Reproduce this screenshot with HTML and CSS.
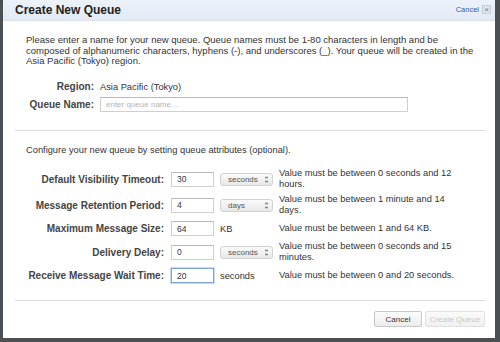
FILE: index.html
```html
<!DOCTYPE html>
<html>
    <head>
        <meta charset="utf-8">
        <title>Create New Queue</title>
        <link rel="stylesheet" href="styles.css">
    </head>
    <body>
        <div class="dialog">
            <div class="dialog-head">
                <h1>Create New Queue</h1>
                <a class="close" href="#">Cancel <span class="close-x">&#215;</span></a>
            </div>
            <div class="dialog-body">
                <p class="intro">Please enter a name for your new queue. Queue names must be 1-80 characters in length and be<br>composed of alphanumeric characters, hyphens (-), and underscores (_). Your queue will be created in the<br>Asia Pacific (Tokyo) region.</p>
                <div class="basic">
                    <span class="label">Region:</span>
                    <span class="value">Asia Pacific (Tokyo)</span>
                    <span class="label">Queue Name:</span>
                    <input class="name-input" placeholder="enter queue name...">
                </div>
                <div class="rule"></div>
                <p class="note">Configure your new queue by setting queue attributes (optional).</p>
                <div class="attrs">
                    <span class="label">Default Visibility Timeout:</span>
                    <input class="num" value="30">
                    <span class="sel">seconds<i class="arrows"></i></span>
                    <span class="hint">Value must be between 0 seconds and 12<br>hours.</span>

                    <span class="label">Message Retention Period:</span>
                    <input class="num" value="4">
                    <span class="sel">days<i class="arrows"></i></span>
                    <span class="hint">Value must be between 1 minute and 14<br>days.</span>

                    <span class="label">Maximum Message Size:</span>
                    <input class="num" value="64">
                    <span class="unit">KB</span>
                    <span class="hint">Value must be between 1 and 64 KB.</span>

                    <span class="label">Delivery Delay:</span>
                    <input class="num" value="0">
                    <span class="sel">seconds<i class="arrows"></i></span>
                    <span class="hint">Value must be between 0 seconds and 15<br>minutes.</span>

                    <span class="label">Receive Message Wait Time:</span>
                    <input class="num focus" value="20">
                    <span class="unit">seconds</span>
                    <span class="hint">Value must be between 0 and 20 seconds.</span>
                </div>
                <div class="rule rule-bottom"></div>
                <div class="actions">
                    <button class="btn">Cancel</button>
                    <button class="btn" disabled>Create Queue</button>
                </div>
            </div>
        </div>
    </body>
</html>
```

FILE: styles.css
```css
*{
    margin: 0;
    padding: 0;
    box-sizing: border-box;
}
body{
    background: #4b5055;
    font-family: "Liberation Sans", Arial, sans-serif;
    font-size: 9.3px;
    color: #333;
}
.dialog{
    width: 492px;
    height: 338px;
    margin-left: 3px;
    background: #fff;
    display: flex;
    flex-direction: column;
}
.dialog-head{
    height: 24px;
    display: flex;
    align-items: center;
    justify-content: space-between;
    padding: 0 4px 0 12px;
    background: linear-gradient(#edf2f9, #e3eaf4);
    border-bottom: 1px solid #dae2ec;
}
.dialog-head h1{
    font-size: 12px;
    font-weight: bold;
    color: #222;
}
.close{
    display: flex;
    align-items: center;
    gap: 3px;
    font-size: 7.5px;
    color: #3d5c94;
    text-decoration: none;
}
.close-x{
    width: 9px;
    height: 9px;
    display: flex;
    align-items: center;
    justify-content: center;
    background: #dfe3e8;
    border: 1px solid #c9ced6;
    color: #777;
    font-size: 8px;
    line-height: 1;
}
.dialog-body{
    flex: 1;
    display: flex;
    flex-direction: column;
    padding: 14px 10px 11px 12px;
}
.intro{
    font-size: 9.5px;
    line-height: 10.7px;
    padding-left: 11px;
}
.label{
    font-weight: bold;
    font-size: 10px;
    color: #444;
    text-align: right;
}
.basic{
    display: grid;
    grid-template-columns: 68px 308px;
    column-gap: 6px;
    row-gap: 5px;
    align-items: center;
    margin: 14px 0 0 11px;
}
.name-input{
    height: 15px;
    border: 1px solid #cfcfcf;
    border-top-color: #b9b9b9;
    font: 8px "Liberation Sans", Arial, sans-serif;
    padding-left: 5px;
    color: #333;
}
.name-input::placeholder{
    color: #b4b4b4;
}
.rule{
    border-top: 1px solid #dadada;
    margin-top: 18px;
}
.note{
    margin: 14px 0 0 11px;
    line-height: 11px;
}
.attrs{
    display: grid;
    grid-template-columns: 139px 43px 54px 180px;
    grid-auto-rows: minmax(17px, auto);
    column-gap: 6px;
    row-gap: 4px;
    align-items: center;
    margin: 12px 0 0 11px;
}
.attrs .label{
    margin-right: 1px;
}
.num{
    width: 43px;
    height: 15px;
    border: 1px solid #cfcfcf;
    border-top-color: #b9b9b9;
    font: 8.5px "Liberation Sans", Arial, sans-serif;
    color: #333;
    padding-left: 5px;
}
.num.focus{
    border-color: #7ea4d8;
    box-shadow: 0 0 0 1px #c8daf2;
}
.sel{
    width: 53px;
    height: 13px;
    display: flex;
    align-items: center;
    justify-content: space-between;
    padding: 0 4px 0 7px;
    font-size: 8px;
    color: #555;
    background: linear-gradient(#fafafa, #e8e8e8);
    border: 1px solid #d2d2d2;
    border-radius: 3px;
}
.arrows{
    width: 3px;
    height: 7px;
    border-top: 2px solid #888;
    border-bottom: 2px solid #888;
    transform: scaleY(0.8);
}
.unit{
    font-size: 9.3px;
    color: #333;
}
.hint{
    line-height: 11px;
    margin-left: -1px;
}
.rule-bottom{
    margin-top: 16px;
}
.actions{
    display: flex;
    justify-content: flex-end;
    gap: 3px;
    margin-top: 10px;
}
.btn{
    height: 16px;
    font: 8px "Liberation Sans", Arial, sans-serif;
    color: #333;
    background: linear-gradient(#fdfdfd, #ececec);
    border: 1px solid #c8c8c8;
    border-radius: 2px;
}
.btn:first-child{
    width: 48px;
}
.btn:disabled{
    width: 60px;
    color: #c9c9c9;
    border-color: #e0e0e0;
    background: linear-gradient(#fafafa, #f1f1f1);
}
```
